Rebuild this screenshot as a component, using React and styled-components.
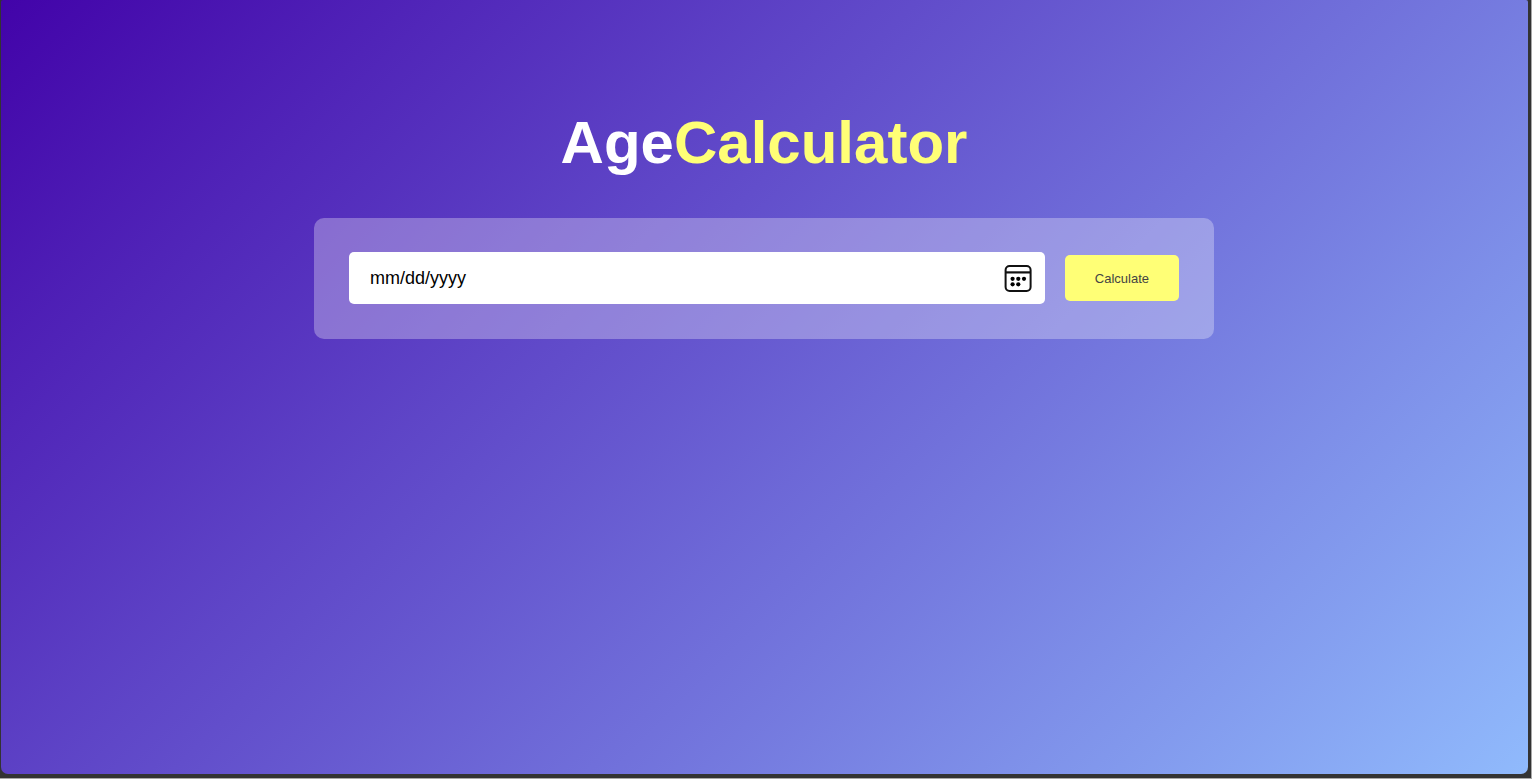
import { useRef, useState } from "react";
import styled, { createGlobalStyle } from "styled-components";

const getAge = (value) => {
  const birth = new Date(`${value}T00:00`);
  const today = new Date();
  let years = today.getFullYear() - birth.getFullYear();
  let months = today.getMonth() - birth.getMonth();
  let days = today.getDate() - birth.getDate();

  if (days < 0) {
    months -= 1;
    days += new Date(today.getFullYear(), today.getMonth(), 0).getDate();
  }
  if (months < 0) {
    years -= 1;
    months += 12;
  }
  return { years, months, days };
};

const CalendarIcon = () => (
  <svg width='28' height='28' viewBox='0 0 28 28' fill='none' aria-hidden='true'>
    <rect x='1.6' y='2' width='25' height='25' rx='4' stroke='#111' strokeWidth='2' />
    <path d='M2 8.4H26.4' stroke='#111' strokeWidth='2.2' />
    <g fill='#000'>
      <circle cx='8.6' cy='14.8' r='2.1' />
      <circle cx='14.3' cy='14.8' r='2.1' />
      <circle cx='20' cy='14.8' r='2.1' />
      <circle cx='8.6' cy='20.3' r='2.1' />
      <circle cx='14.3' cy='20.3' r='2.1' />
    </g>
  </svg>
);

const App = () => {
  const [birthDate, setBirthDate] = useState("");
  const [age, setAge] = useState(null);
  const inputRef = useRef(null);

  const handleSubmit = (e) => {
    e.preventDefault();
    if (birthDate) setAge(getAge(birthDate));
  };

  return (
    <>
      <GlobalStyle />
      <Frame>
        <Page>
          <Calculator>
            <Title>
              Age<Accent>Calculator</Accent>
            </Title>
            <InputBox onSubmit={handleSubmit}>
              <Field>
                <DateInput
                  ref={inputRef}
                  type='date'
                  aria-label='Date of birth'
                  value={birthDate}
                  onChange={(e) => setBirthDate(e.target.value)}
                />
                <PickerButton
                  type='button'
                  aria-label='Open calendar'
                  onClick={() => inputRef.current.showPicker()}
                >
                  <CalendarIcon />
                </PickerButton>
              </Field>
              <CalculateButton type='submit'>Calculate</CalculateButton>
            </InputBox>
            {age && (
              <Result>
                You are <Accent>{age.years}</Accent> years,{" "}
                <Accent>{age.months}</Accent> months and{" "}
                <Accent>{age.days}</Accent> days old
              </Result>
            )}
          </Calculator>
        </Page>
      </Frame>
    </>
  );
};

export default App;

const GlobalStyle = createGlobalStyle`
  * {
    margin: 0;
    padding: 0;
    box-sizing: border-box;
    font-family: "Liberation Sans", Arial, sans-serif;
  }
`;

// window edge around the page
const Frame = styled.div`
  display: flex;
  min-height: 100vh;
  padding: 0 3px 4px 1px;
  background: #333;
  border: solid #a8a8a8;
  border-width: 0 1px 1px 0;
`;

const Page = styled.main`
  flex: 1;
  padding: 0 11px 0 10px;
  color: #fff;
  background: linear-gradient(135deg, #4203a9, #90bafc);
  border-radius: 2px 2px 7px 7px;
`;

const Calculator = styled.div`
  width: 100%;
  max-width: 900px;
  margin: 108px auto 0;
`;

const Title = styled.h1`
  font-size: 60px;
  line-height: 70px;
  text-align: center;
`;

const Accent = styled.span`
  color: #ffff76;
`;

const InputBox = styled.form`
  display: flex;
  align-items: center;
  gap: 20px;
  margin-top: 40px;
  padding: 34px 35px 35px;
  background: rgba(255, 255, 255, 0.3);
  border-radius: 10px;
`;

const Field = styled.div`
  display: flex;
  flex: 1;
  align-items: center;
  height: 52px;
  padding: 0 13px 0 21px;
  background: #fff;
  border-radius: 5px;
`;

const DateInput = styled.input`
  flex: 1;
  min-width: 0;
  height: 100%;
  font-size: 18px;
  color: #000;
  background: transparent;
  border: 0;
  outline: 0;

  &::-webkit-datetime-edit-month-field,
  &::-webkit-datetime-edit-day-field,
  &::-webkit-datetime-edit-year-field {
    padding: 0;
  }

  &::-webkit-calendar-picker-indicator {
    display: none;
  }
`;

const PickerButton = styled.button`
  display: flex;
  background: transparent;
  border: 0;
  cursor: pointer;
`;

const CalculateButton = styled.button`
  height: 46px;
  padding: 0 30px;
  font-size: 13px;
  color: #444;
  background: #ffff76;
  border: 0;
  border-radius: 5px;
  cursor: pointer;
`;

const Result = styled.p`
  margin-top: 20px;
  font-size: 20px;
`;
